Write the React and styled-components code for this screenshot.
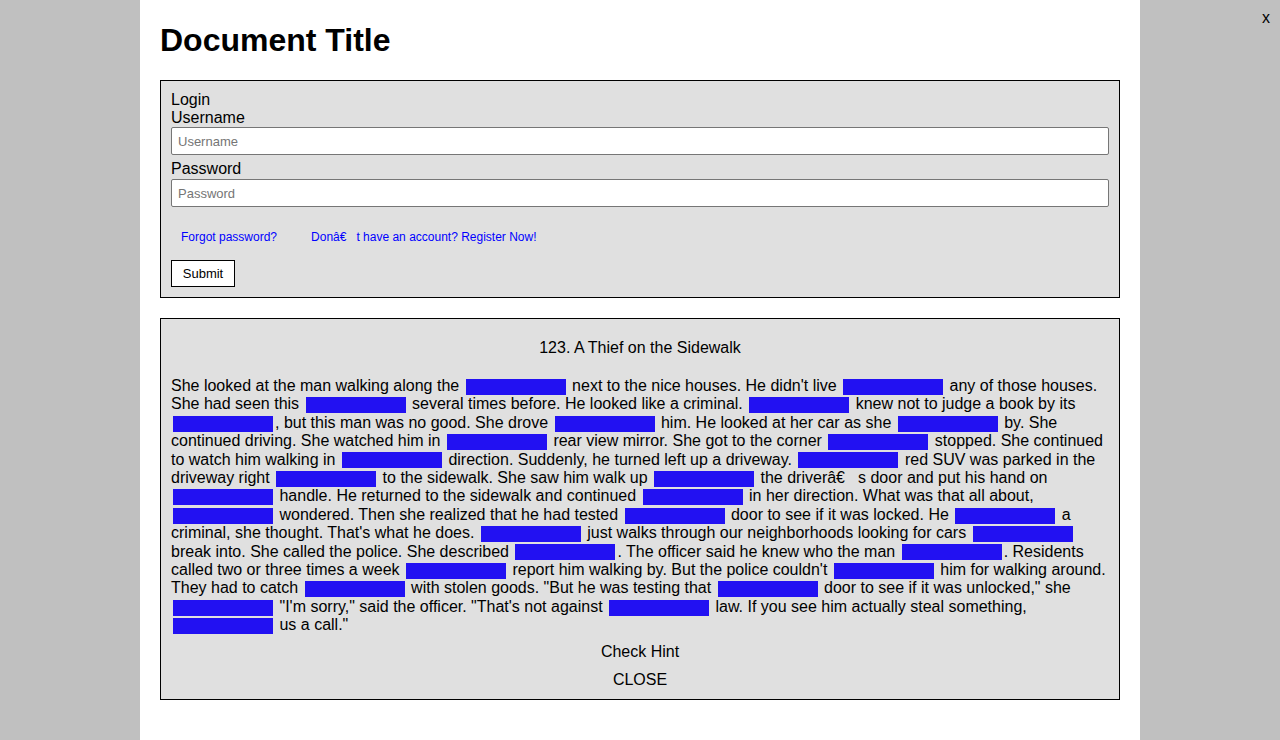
import styled, { createGlobalStyle } from "styled-components";

const GlobalStyle = createGlobalStyle`
  body {
    margin: 0;
    background-color: #c0c0c0;
    font-family: "Liberation Sans", Arial, sans-serif;
    font-size: 16px;
    color: #000;
  }
`;

const Page = styled.div`
  width: 1000px;
  min-height: 100vh;
  margin: 0 auto;
  padding: 0 20px;
  box-sizing: border-box;
  background-color: #fff;
  overflow: hidden;
`;

const CloseX = styled.div`
  position: absolute;
  top: 9px;
  right: 10px;
  font-size: 16px;
  cursor: pointer;
`;

const Title = styled.h1`
  font-size: 32px;
  margin: 22px 0 21px;
`;

const Box = styled.div`
  border: 1px solid #000;
  background-color: #e0e0e0;
  padding: 10px;
  margin-bottom: 20px;
`;

const Label = styled.div`
  line-height: 18px;
  height: ${(p) => p.$h || 18}px;
`;

const Input = styled.input`
  display: block;
  width: 100%;
  height: 28px;
  box-sizing: border-box;
  margin: 0 0 5px;
  padding: 0 6px;
  border: 1px solid #767676;
  border-radius: 2px;
  background: #fff;
  font-family: "Liberation Sans", Arial, sans-serif;
  font-size: 13px;

  &::placeholder {
    color: #757575;
  }
`;

const LinkRow = styled.div`
  display: flex;
  gap: 34px;
  padding: 18px 10px 16px;
  line-height: 14px;
`;

const Link = styled.a`
  color: #0000ff;
  font-size: 12px;
  text-decoration: none;
`;

const Submit = styled.button`
  height: 27px;
  width: 64px;
  padding: 0;
  border: 1px solid #000;
  background: #fff;
  font-family: "Liberation Sans", Arial, sans-serif;
  font-size: 13px;
  color: #000;
  display: block;
`;

const StoryTitle = styled.div`
  text-align: center;
  padding-top: 10px;
  margin-bottom: 20px;
`;

const Story = styled.p`
  margin: 0;
  line-height: 18.4px;
`;

const Blank = styled.span`
  display: inline-block;
  width: 100px;
  height: 16px;
  margin: 0 2px;
  vertical-align: middle;
  background-color: #2211f2;
`;

const Action = styled.div`
  text-align: center;
  margin-top: ${(p) => p.$gap || 10}px;
  line-height: 18px;
  cursor: pointer;
`;

const storyText =
  "She looked at the man walking along the _ next to the nice houses. He didn't live _ any of those houses. She had seen this _ several times before. He looked like a criminal. _ knew not to judge a book by its _, but this man was no good. She drove _ him. He looked at her car as she _ by. She continued driving. She watched him in _ rear view mirror. She got to the corner _ stopped. She continued to watch him walking in _ direction. Suddenly, he turned left up a driveway. _ red SUV was parked in the driveway right _ to the sidewalk. She saw him walk up _ the driver\u00e2\u20ac\u0099s door and put his hand on _ handle. He returned to the sidewalk and continued _ in her direction. What was that all about, _ wondered. Then she realized that he had tested _ door to see if it was locked. He _ a criminal, she thought. That's what he does. _ just walks through our neighborhoods looking for cars _ break into. She called the police. She described _. The officer said he knew who the man _. Residents called two or three times a week _ report him walking by. But the police couldn't _ him for walking around. They had to catch _ with stolen goods. \"But he was testing that _ door to see if it was unlocked,\" she _ \"I'm sorry,\" said the officer. \"That's not against _ law. If you see him actually steal something, _ us a call.\"";

function App() {
  const parts = storyText.split("_");
  return (
    <>
      <GlobalStyle />
      <CloseX>x</CloseX>
      <Page>
        <Title>Document Title</Title>
        <Box>
          <Label>Login</Label>
          <Label>Username</Label>
          <Input placeholder="Username" />
          <Label $h={19}>Password</Label>
          <Input type="password" placeholder="Password" />
          <LinkRow>
            <Link href="#">Forgot password?</Link>
            <Link href="#">Don{"\u00e2\u20ac\u0099"}t have an account? Register Now!</Link>
          </LinkRow>
          <Submit>Submit</Submit>
        </Box>
        <Box>
          <StoryTitle>123. A Thief on the Sidewalk</StoryTitle>
          <Story>
            {parts.map((p, i) => (
              <span key={i}>
                {p}
                {i < parts.length - 1 && <Blank />}
              </span>
            ))}
          </Story>
          <Action $gap={8}>Check Hint</Action>
          <Action>CLOSE</Action>
        </Box>
      </Page>
    </>
  );
}

export default App;
